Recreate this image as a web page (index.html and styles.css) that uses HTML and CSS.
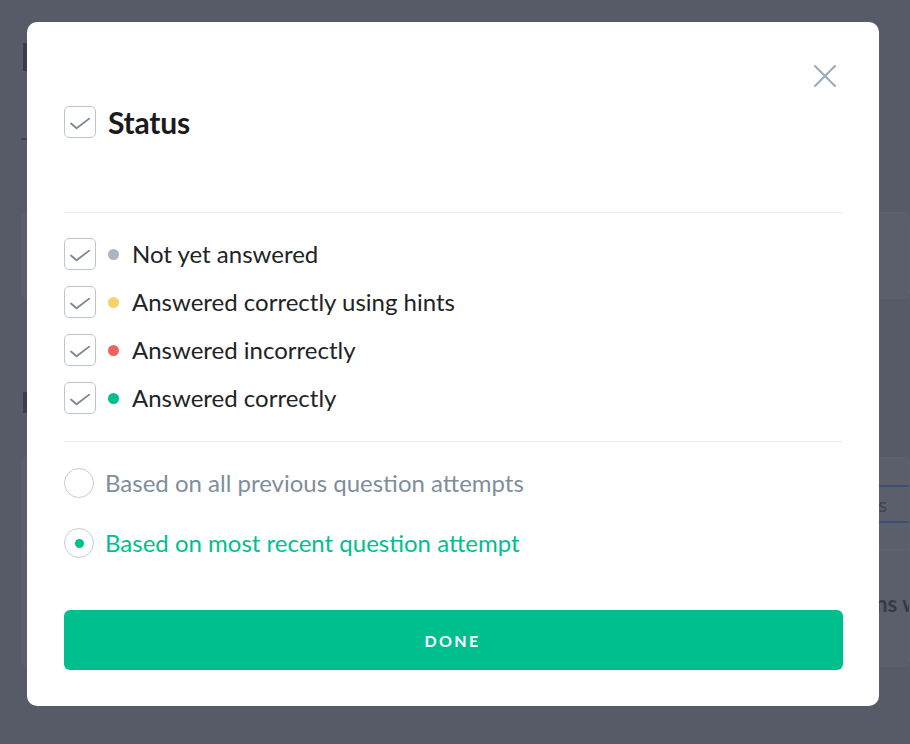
FILE: index.html
```html
<!DOCTYPE html>
<html lang="en">
<head>
<meta charset="utf-8">
<title>Status filter</title>
<link rel="stylesheet" href="styles.css">
</head>
<body>
<div class="page">
  <div class="page-title">Reports</div>
  <div class="page-tabs"><span class="tab-active">Overview</span></div>
  <div class="bg-card bg-card-1"></div>
  <div class="page-subtitle">Questions</div>
  <div class="bg-card bg-card-2">
    <div class="bg-row bg-row-top">
      <span class="bg-btn">Filter questions</span>
    </div>
    <div class="bg-row bg-row-bottom">
      <span class="bg-bold">Questions with</span>
    </div>
  </div>
</div>

<div class="overlay">
  <div class="modal">
    <div class="modal-top">
      <button class="close" aria-label="Close">
        <svg width="24" height="24" viewBox="0 0 24 24"><path d="M2 2L22 22M22 2L2 22" stroke="#9dadba" stroke-width="2.2" stroke-linecap="round" fill="none"/></svg>
      </button>
    </div>
    <div class="header">
      <span class="check">
        <svg width="32" height="32" viewBox="0 0 32 32"><path d="M7 17.5L12.6 22.2L25.2 12.6" stroke="#7b8794" stroke-width="1.8" fill="none" stroke-linecap="round" stroke-linejoin="round"/></svg>
      </span>
      <span class="title">Status</span>
    </div>
    <div class="divider divider-1"></div>
    <ul class="options">
      <li class="option">
        <span class="check"><svg width="32" height="32" viewBox="0 0 32 32"><path d="M7 17.5L12.6 22.2L25.2 12.6" stroke="#7b8794" stroke-width="1.8" fill="none" stroke-linecap="round" stroke-linejoin="round"/></svg></span>
        <span class="dot dot-grey"></span>
        <span class="label">Not yet answered</span>
      </li>
      <li class="option">
        <span class="check"><svg width="32" height="32" viewBox="0 0 32 32"><path d="M7 17.5L12.6 22.2L25.2 12.6" stroke="#7b8794" stroke-width="1.8" fill="none" stroke-linecap="round" stroke-linejoin="round"/></svg></span>
        <span class="dot dot-yellow"></span>
        <span class="label">Answered correctly using hints</span>
      </li>
      <li class="option">
        <span class="check"><svg width="32" height="32" viewBox="0 0 32 32"><path d="M7 17.5L12.6 22.2L25.2 12.6" stroke="#7b8794" stroke-width="1.8" fill="none" stroke-linecap="round" stroke-linejoin="round"/></svg></span>
        <span class="dot dot-red"></span>
        <span class="label">Answered incorrectly</span>
      </li>
      <li class="option">
        <span class="check"><svg width="32" height="32" viewBox="0 0 32 32"><path d="M7 17.5L12.6 22.2L25.2 12.6" stroke="#7b8794" stroke-width="1.8" fill="none" stroke-linecap="round" stroke-linejoin="round"/></svg></span>
        <span class="dot dot-green"></span>
        <span class="label">Answered correctly</span>
      </li>
    </ul>
    <div class="divider divider-2"></div>
    <div class="radios">
      <div class="radio-row">
        <span class="radio"></span>
        <span class="radio-label">Based on all previous question attempts</span>
      </div>
      <div class="radio-row radio-selected">
        <span class="radio"><span class="radio-dot"></span></span>
        <span class="radio-label">Based on most recent question attempt</span>
      </div>
    </div>
    <button class="done">DONE</button>
  </div>
</div>
</body>
</html>
```

FILE: styles.css
```css
* { box-sizing: border-box; }
html, body { margin: 0; padding: 0; }
body {
  width: 910px;
  height: 744px;
  overflow: hidden;
  background: #575b67;
  font-family: Lato, "Open Sans", "Liberation Sans", sans-serif;
}

/* background page (seen through overlay) */
.page {
  padding: 43px 0 0 21px;
  color: #353945;
}
.page-title {
  margin-left: 2px;
  height: 28px;
  width: 120px;
  background: #3a3e4a;
  color: transparent;
  font-size: 20px;
}
.page-tabs {
  margin-top: 67px;
  height: 2px;
  width: 100px;
  background: #404451;
}
.tab-active { display: none; }
.bg-card {
  background: #5b5f6b;
  border-radius: 6px;
  border: 1px solid #5e626e;
}
.bg-card-1 {
  margin-top: 72px;
  height: 87px;
}
.page-subtitle {
  margin-top: 93px;
  margin-left: 2px;
  height: 21px;
  width: 110px;
  background: #3b3f4b;
  color: transparent;
}
.bg-card-2 {
  margin-top: 44px;
  height: 210px;
  display: flex;
  flex-direction: column;
  overflow: hidden;
}
.bg-row {
  display: flex;
  justify-content: flex-end;
  align-items: center;
}
.bg-row-top {
  height: 92px;
  border-bottom: 1px solid #5f6370;
}
.bg-btn {
  height: 38px;
  border-top: 2px solid #384f77;
  border-bottom: 2px solid #384f77;
  display: flex;
  align-items: center;
  padding-right: 22px;
  font-size: 20px;
  color: #3f4350;
}
.bg-row-bottom {
  padding-top: 40px;
  justify-content: flex-end;
}
.bg-bold {
  font-weight: 700;
  font-size: 22px;
  color: #363a46;
  margin-right: -37px;
  white-space: nowrap;
}

/* overlay + modal */
.overlay {
  position: fixed;
  inset: 0;
  padding: 22px 0 0 27px;
}
.modal {
  width: 852px;
  height: 684px;
  background: #ffffff;
  border-radius: 10px;
  padding: 0 36px 0 37px;
  display: flex;
  flex-direction: column;
}
.modal-top {
  height: 66px;
  display: flex;
  justify-content: flex-end;
  align-items: flex-end;
  padding-right: 6px;
}
.close {
  width: 24px;
  height: 24px;
  padding: 0;
  border: 0;
  background: none;
  display: flex;
}
.header {
  margin-top: 18px;
  display: flex;
  align-items: center;
  gap: 12px;
  height: 32px;
}
.check {
  width: 32px;
  height: 32px;
  flex: none;
  border: 1px solid #bcc5ce;
  border-radius: 5px;
  display: flex;
  align-items: center;
  justify-content: center;
  overflow: hidden;
}
.check svg { flex: none; }
.title {
  font-size: 30px;
  font-weight: 700;
  color: #1b1b1d;
  letter-spacing: -0.2px;
  line-height: 32px;
}
.divider {
  height: 1px;
  background: #e9edf0;
}
.divider-1 { margin-top: 74px; }
.options {
  list-style: none;
  margin: 25px 0 0 0;
  padding: 0;
  display: flex;
  flex-direction: column;
  gap: 16px;
}
.option {
  display: flex;
  align-items: center;
  height: 32px;
}
.dot {
  width: 11px;
  height: 11px;
  border-radius: 50%;
  margin: 0 13px 0 12px;
  flex: none;
}
.dot-grey { background: #aab5c0; }
.dot-yellow { background: #f3d267; }
.dot-red { background: #ee6262; }
.dot-green { background: #00bf8f; }
.label {
  font-size: 24px;
  line-height: 32px;
  color: #222326;
}
.divider-2 { margin-top: 27px; }
.radios {
  margin-top: 26px;
  display: flex;
  flex-direction: column;
  gap: 30px;
}
.radio-row {
  display: flex;
  align-items: center;
  height: 30px;
}
.radio {
  width: 30px;
  height: 30px;
  border-radius: 50%;
  border: 1px solid #c3ccd4;
  display: flex;
  align-items: center;
  justify-content: center;
  margin-right: 11px;
  flex: none;
}
.radio-dot {
  width: 9px;
  height: 9px;
  border-radius: 50%;
  background: #00bf8f;
}
.radio-label {
  font-size: 24px;
  line-height: 30px;
  color: #7f8e9d;
}
.radio-selected .radio-label { color: #00bf8f; }
.done {
  margin-top: 52px;
  height: 60px;
  width: 779px;
  border: 0;
  border-radius: 6px;
  background: #00bf8f;
  color: #ffffff;
  font-family: Lato, "Open Sans", "Liberation Sans", sans-serif;
  font-size: 16px;
  font-weight: 700;
  letter-spacing: 2.3px;
  padding: 0 2px 0 0;
}
```
